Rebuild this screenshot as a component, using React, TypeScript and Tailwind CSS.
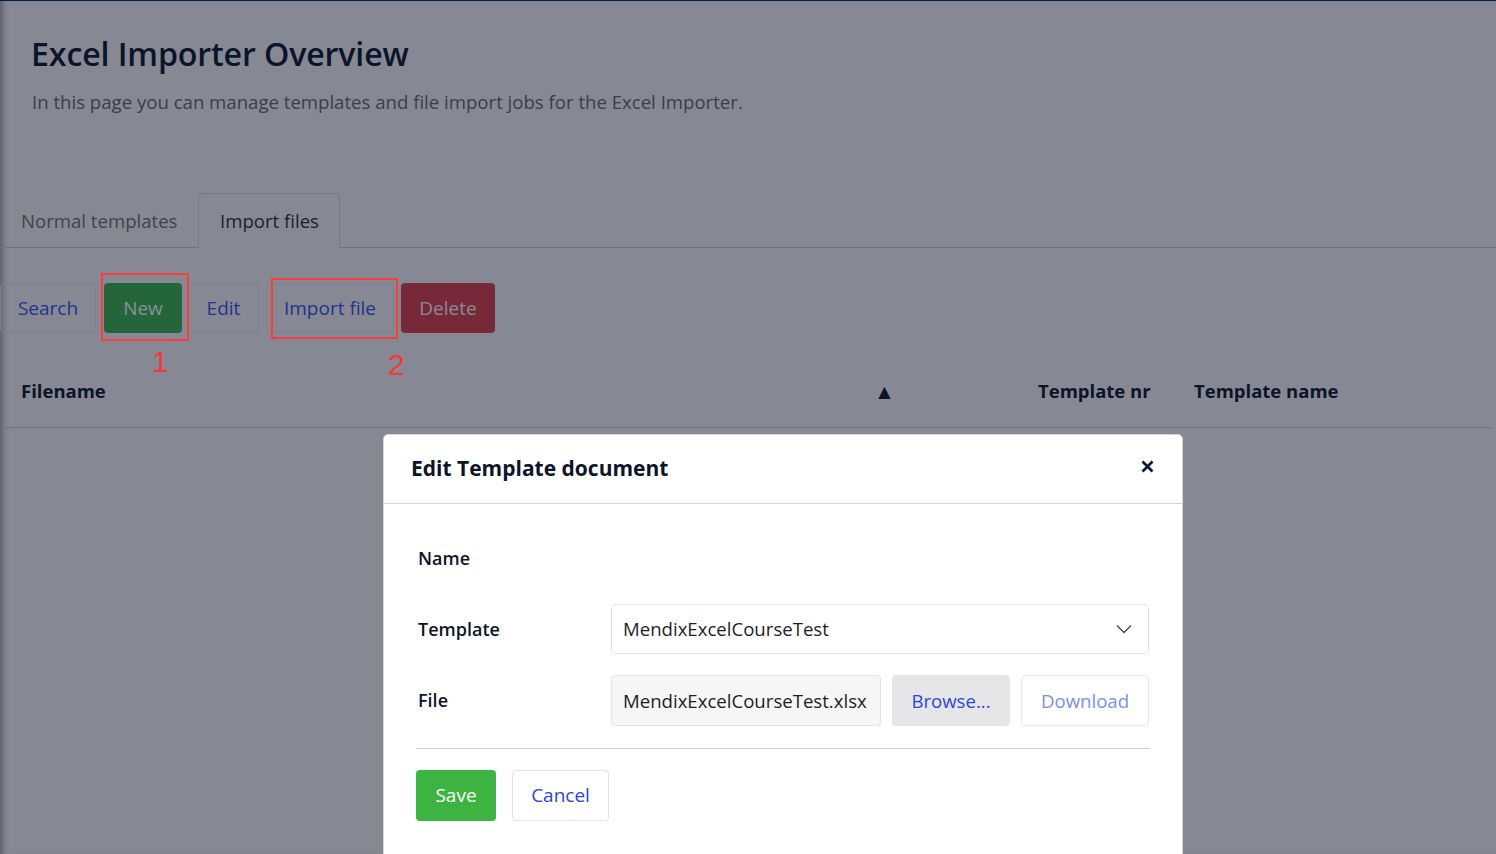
import React from "react";

const font = { fontFamily: '"Open Sans", "Noto Sans", sans-serif' };

export default function App() {
  return (
    <div
      className="relative w-[1496px] h-[854px] overflow-hidden bg-[#868993] border-t border-[#0b1a4f] shadow-[inset_7px_0_6px_-5px_rgba(20,25,40,0.45)]"
      style={font}
    >
      {/* Page header */}
      <div className="pl-[32px] pt-[31px]">
        <h1 className="text-[32.2px] leading-[44px] font-semibold text-[#0c1428] tracking-[-0.15px] -ml-px">
          Excel Importer Overview
        </h1>
        <p className="mt-[13px] text-[18.6px] leading-[26px] text-[#383e4e]">
          In this page you can manage templates and file import jobs for the Excel Importer.
        </p>
      </div>

      {/* Tabs */}
      <div className="mt-[78px] flex items-end border-b border-[#6f737d] pl-[4px] h-[55px]">
        <div className="px-[17px] h-[54px] pt-[2px] flex items-center text-[18.6px] text-[#3e4350] whitespace-nowrap">
          Normal templates
        </div>
        <div className="ml-[4px] shrink-0 w-[142px] h-[55px] -mb-px flex items-center justify-center whitespace-nowrap text-[18.6px] text-[#1a1f2c] border border-b-0 border-[#767a84] rounded-t-[4px] bg-[#868993]">
          Import files
        </div>
      </div>

      {/* Buttons */}
      <div className="relative mt-[35px] flex items-center h-[50px]">
        <button className="h-[50px] w-[96px] rounded-[4px] border border-[#7c808a] text-[19px] text-[#23348a]">
          Search
        </button>
        <button className="ml-[8px] h-[50px] w-[78px] rounded-[4px] bg-[#24663a] text-[19px] text-[#889196]">
          New
        </button>
        <button className="ml-[6px] h-[50px] w-[71px] rounded-[4px] border border-[#7c808a] text-[19px] text-[#23348a]">
          Edit
        </button>
        <button className="ml-[7px] h-[50px] w-[128px] rounded-[4px] border border-[#7c808a] text-[19px] text-[#23348a]">
          Import file
        </button>
        <button className="ml-[7px] h-[50px] w-[94px] rounded-[4px] bg-[#772839] text-[19px] text-[#8a8c98]">
          Delete
        </button>

        {/* Annotations */}
        <div className="absolute left-[101px] top-[-10px] w-[88px] h-[68px] border-2 border-[#ff3b3b]" />
        <div className="absolute left-[271px] top-[-5px] w-[127px] h-[61px] border-2 border-[#ff3b3b]" />
        <div
          className="absolute left-[152px] top-[63px] text-[30px] leading-[32px] text-[#f23a3a]"
          style={{ fontFamily: '"Liberation Sans", sans-serif' }}
        >
          1
        </div>
        <div
          className="absolute left-[388px] top-[66px] text-[30px] leading-[32px] text-[#f23a3a]"
          style={{ fontFamily: '"Liberation Sans", sans-serif' }}
        >
          2
        </div>
      </div>

      {/* Table header */}
      <div className="mt-[33px] mx-[4px] h-[62px] pb-[11px] flex items-center border-b border-[#6f737d] text-[18.5px] font-bold text-[#0c1428]">
        <div className="pl-[17px] w-[870px]">Filename</div>
        <div className="w-[164px] text-[21px] leading-none">▲</div>
        <div className="w-[156px]">Template nr</div>
        <div>Template name</div>
      </div>

      {/* Modal */}
      <div className="absolute left-[383px] top-[433px] w-[800px] h-[440px] bg-white rounded-[5px] border border-[#d6d6d6]">
        <div className="h-[69px] flex items-center justify-between pl-[27px] pr-[28px] border-b border-[#d4d4d6]">
          <div className="text-[21px] font-bold text-[#0c1428]">Edit Template document</div>
          <svg width="13" height="13" viewBox="0 0 13 13" className="mt-[-6px]">
            <path d="M1.5 1.5 L11.5 11.5 M11.5 1.5 L1.5 11.5" stroke="#0c1428" strokeWidth="2.6" />
          </svg>
        </div>
        <div className="pl-[34px] pr-[33px] pt-[29px]">
          <div className="h-[50px] flex items-center text-[18px] font-semibold text-[#0c1428]">Name</div>
          <div className="mt-[21px] h-[50px] flex items-center">
            <div className="w-[193px] text-[18px] font-semibold text-[#0c1428]">Template</div>
            <div className="flex-1 h-[50px] rounded-[4px] border border-[#e3e3e3] flex items-center justify-between pl-[11px] pr-[16px] text-[18.6px] text-[#1c1f28]">
              <span>MendixExcelCourseTest</span>
              <svg width="16" height="10" viewBox="0 0 16 10">
                <path d="M1 1.5 L8 8.5 L15 1.5" fill="none" stroke="#444" strokeWidth="1.3" />
              </svg>
            </div>
          </div>
          <div className="mt-[21px] h-[51px] flex items-center">
            <div className="w-[193px] text-[18px] font-semibold text-[#0c1428]">File</div>
            <div className="w-[270px] h-[51px] rounded-[4px] border border-[#e3e3e3] bg-[#f6f6f6] flex items-center pl-[11px] text-[18.6px] text-[#1c1f28]">
              MendixExcelCourseTest.xlsx
            </div>
            <div className="ml-[11px] w-[118px] h-[51px] rounded-[4px] bg-[#e6e6e8] flex items-center justify-center text-[18.6px] text-[#2d46dd]">
              Browse...
            </div>
            <div className="ml-[11px] w-[128px] h-[51px] rounded-[4px] border border-[#e6e6e8] flex items-center justify-center text-[18.6px] text-[#7a8ef0]">
              Download
            </div>
          </div>
        </div>
        <div className="ml-[32px] mr-[32px] mt-[22px] border-t border-[#cfcfcf]" />
        <div className="pl-[32px] pt-[21px] flex gap-[16px]">
          <button className="w-[80px] h-[51px] rounded-[4px] bg-[#3db342] text-[19px] text-white">Save</button>
          <button className="w-[97px] h-[51px] rounded-[4px] border border-[#e3e3e3] text-[19px] text-[#2d46dd]">Cancel</button>
        </div>
      </div>
    </div>
  );
}
